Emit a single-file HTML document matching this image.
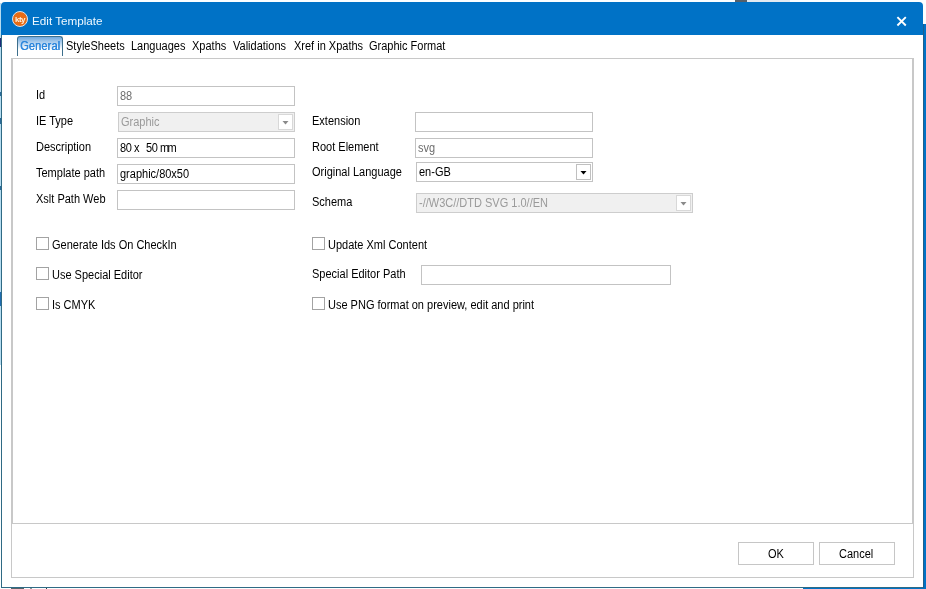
<!DOCTYPE html>
<html>
<head>
<meta charset="utf-8">
<style>
html,body{margin:0;padding:0;}
body{width:926px;height:589px;position:relative;overflow:hidden;background:#ffffff;font-family:"Liberation Sans",sans-serif;font-size:11px;color:#000;}
.a{position:absolute;}
.lbl{position:absolute;white-space:pre;line-height:13px;color:#000;font-size:12px;transform:scaleX(0.9167);transform-origin:0 0;margin-top:-0.4px;}
.tb{position:absolute;box-sizing:border-box;border:1px solid #c3c3c3;background:#fff;height:20px;}
.tbd{position:absolute;box-sizing:border-box;border:1px solid #cfcfcf;background:#fff;height:20px;}
.txt{position:absolute;white-space:pre;line-height:13px;font-size:12px;transform:scaleX(0.9167);transform-origin:0 0;margin-top:-0.4px;}
.cb{position:absolute;box-sizing:border-box;width:13px;height:13px;border:1px solid #a3a3a3;background:#fff;}
.btn{position:absolute;box-sizing:border-box;border:1px solid #c6c6c6;background:#fff;width:76px;height:23px;}
</style>
</head>
<body>
<div id="root" style="position:absolute;left:0;top:0;width:926px;height:589px;will-change:transform;">
<!-- background leftovers -->
<div class="a" style="left:0;top:0;width:926px;height:589px;background:#fbfeff;"></div>

<!-- dialog frame -->
<div class="a" style="left:0;top:3px;width:1px;height:362px;background:#b5dcf0;"></div>
<div class="a" style="left:0;top:38px;width:1px;height:9px;background:#1c2a78;"></div>
<div class="a" style="left:0;top:92px;width:1px;height:4px;background:#2a6a98;"></div>
<div class="a" style="left:0;top:118px;width:1px;height:6px;background:#2a6a98;"></div>
<div class="a" style="left:0;top:186px;width:1px;height:4px;background:#2a6a98;"></div>
<div class="a" style="left:0;top:292px;width:1px;height:14px;background:#1f6cb0;"></div>
<div class="a" style="left:735px;top:0;width:12px;height:2px;background:#55606a;"></div>
<div class="a" style="left:747px;top:0;width:43px;height:2px;background:#e2eaf1;"></div>
<div class="a" style="left:11px;top:588px;width:13px;height:1px;background:#56636a;"></div>
<div class="a" style="left:30px;top:588px;width:2px;height:1px;background:#8a949a;"></div>
<div class="a" style="left:46px;top:588px;width:1px;height:1px;background:#30383e;"></div>
<div class="a" style="left:1px;top:2px;width:922px;height:585px;background:#fff;"></div>
<div class="a" style="left:1px;top:30px;width:1px;height:558px;background:#2f6a84;"></div>
<div class="a" style="left:1px;top:587px;width:922px;height:1px;background:#2f6a84;"></div>
<div class="a" style="left:923px;top:24px;width:1px;height:565px;background:#1f5f8c;"></div>
<div class="a" style="left:924px;top:24px;width:2px;height:565px;background:#0072c6;"></div>
<div class="a" style="left:803px;top:588px;width:123px;height:1px;background:#0072c6;"></div>

<!-- title bar -->
<div class="a" style="left:1px;top:2px;width:922px;height:33px;background:#0072c6;border-radius:4px 4px 0 0;"></div>
<!-- app icon -->
<div class="a" style="left:12px;top:11px;width:16px;height:16px;box-sizing:border-box;border-radius:50%;background:radial-gradient(circle,#e86c14 55%,#cf6a2a 100%);border:1px solid #dfe4ea;"></div>
<div class="a" style="left:12px;top:15px;width:16px;text-align:center;color:#fff1dc;font-size:8px;font-weight:bold;line-height:10px;letter-spacing:-0.6px;">kty</div>
<div class="lbl" style="left:32px;top:12.5px;font-size:11.7px;line-height:15px;color:#eef8ff;transform:none;margin-top:0;">Edit Template</div>
<!-- close X -->
<svg class="a" style="left:896px;top:16px;" width="12" height="12" viewBox="0 0 12 12"><path d="M1.4 1.1 L9.8 9.5 M9.8 1.1 L1.4 9.5" stroke="#fff" stroke-width="1.9"/></svg>

<!-- tab strip -->
<div class="a" style="left:17px;top:36px;width:46px;height:20px;box-sizing:border-box;border:1px solid #3d6f8c;border-bottom:none;border-radius:3px 3px 0 0;background:linear-gradient(#6fa9e0,#ffffff 65%);"></div>
<div class="lbl" style="left:20px;top:40px;color:#2b86dc;letter-spacing:0.15px;text-shadow:0.45px 0 0 #2b86dc;">General</div>
<div class="lbl" style="left:66px;top:40px;">StyleSheets</div>
<div class="lbl" style="left:131px;top:40px;">Languages</div>
<div class="lbl" style="left:192px;top:40px;">Xpaths</div>
<div class="lbl" style="left:233px;top:40px;">Validations</div>
<div class="lbl" style="left:294px;top:40px;">Xref in Xpaths</div>
<div class="lbl" style="left:369px;top:40px;">Graphic Format</div>

<!-- tab page border -->
<div class="a" style="left:11px;top:58px;width:903px;height:466px;box-sizing:border-box;border:1px solid #c8c8c8;border-left:2px solid #c8c8c8;border-right:2px solid #c8c8c8;"></div>

<!-- bottom group -->
<div class="a" style="left:11px;top:524px;width:903px;height:54px;box-sizing:border-box;border:1px solid #c8c8c8;border-top:none;"></div>

<!-- left column -->
<div class="lbl" style="left:36px;top:89px;">Id</div>
<div class="tb" style="left:117px;top:86px;width:178px;"></div>
<div class="txt" style="left:120px;top:90px;color:#6d6d6d;">88</div>

<div class="lbl" style="left:36px;top:115px;">IE Type</div>
<div class="tbd" style="left:118px;top:112px;width:177px;background:#f0f0f0;border-color:#cdcdcd;"></div>
<div class="txt" style="left:121px;top:116px;color:#9a9a9a;">Graphic</div>
<div class="a" style="left:278px;top:114px;width:15px;height:16px;box-sizing:border-box;border:1px solid #d8d8d8;background:#fff;"></div>
<svg class="a" style="left:282px;top:121px;" width="7" height="4"><path d="M0.5 0 L6.5 0 L3.5 3.5 Z" fill="#8a8a8a"/></svg>

<div class="lbl" style="left:36px;top:141px;">Description</div>
<div class="tb" style="left:117px;top:138px;width:178px;"></div>
<div class="txt" style="left:120px;top:142px;letter-spacing:-0.3px;">80</div><div class="txt" style="left:133.6px;top:142px;">x</div><div class="txt" style="left:145.6px;top:142px;letter-spacing:-0.3px;">50</div><div class="txt" style="left:160.4px;top:142px;letter-spacing:-1.8px;">mm</div>

<div class="lbl" style="left:36px;top:167px;">Template path</div>
<div class="tb" style="left:117px;top:164px;width:178px;"></div>
<div class="txt" style="left:120px;top:168px;">graphic/80x50</div>

<div class="lbl" style="left:36px;top:193px;">Xslt Path Web</div>
<div class="tb" style="left:117px;top:190px;width:178px;"></div>

<!-- right column -->
<div class="lbl" style="left:312px;top:115px;">Extension</div>
<div class="tb" style="left:415px;top:112px;width:178px;"></div>

<div class="lbl" style="left:312px;top:141px;">Root Element</div>
<div class="tb" style="left:415px;top:138px;width:178px;"></div>
<div class="txt" style="left:418px;top:142px;color:#6d6d6d;">svg</div>

<div class="lbl" style="left:312px;top:166px;">Original Language</div>
<div class="tb" style="left:416px;top:162px;width:177px;"></div>
<div class="txt" style="left:419px;top:166px;">en-GB</div>
<div class="a" style="left:576px;top:164px;width:15px;height:16px;box-sizing:border-box;border:1px solid #c0c0c0;background:#fff;"></div>
<svg class="a" style="left:580px;top:171px;" width="7" height="4"><path d="M0.5 0 L6.5 0 L3.5 3.5 Z" fill="#000"/></svg>

<div class="lbl" style="left:312px;top:196px;">Schema</div>
<div class="tbd" style="left:416px;top:193px;width:277px;background:#f0f0f0;border-color:#cdcdcd;"></div>
<div class="txt" style="left:419px;top:197px;color:#9a9a9a;">-//W3C//DTD SVG 1.0//EN</div>
<div class="a" style="left:676px;top:195px;width:15px;height:16px;box-sizing:border-box;border:1px solid #d8d8d8;background:#fff;"></div>
<svg class="a" style="left:680px;top:202px;" width="7" height="4"><path d="M0.5 0 L6.5 0 L3.5 3.5 Z" fill="#8a8a8a"/></svg>

<!-- checkboxes -->
<div class="cb" style="left:36px;top:237px;"></div>
<div class="lbl" style="left:52px;top:239px;">Generate Ids On CheckIn</div>
<div class="cb" style="left:36px;top:267px;"></div>
<div class="lbl" style="left:52px;top:269px;">Use Special Editor</div>
<div class="cb" style="left:36px;top:297px;"></div>
<div class="lbl" style="left:52px;top:299px;">Is CMYK</div>

<div class="cb" style="left:312px;top:237px;"></div>
<div class="lbl" style="left:328px;top:239px;">Update Xml Content</div>
<div class="lbl" style="left:312px;top:268px;">Special Editor Path</div>
<div class="tb" style="left:421px;top:265px;width:250px;"></div>
<div class="cb" style="left:312px;top:297px;"></div>
<div class="lbl" style="left:328px;top:299px;">Use PNG format on preview, edit and print</div>

<!-- buttons -->
<div class="btn" style="left:738px;top:542px;"></div>
<div class="lbl" style="left:768px;top:548px;">OK</div>
<div class="btn" style="left:819px;top:542px;"></div>
<div class="lbl" style="left:839px;top:548px;">Cancel</div>
</div>
</body>
</html>
